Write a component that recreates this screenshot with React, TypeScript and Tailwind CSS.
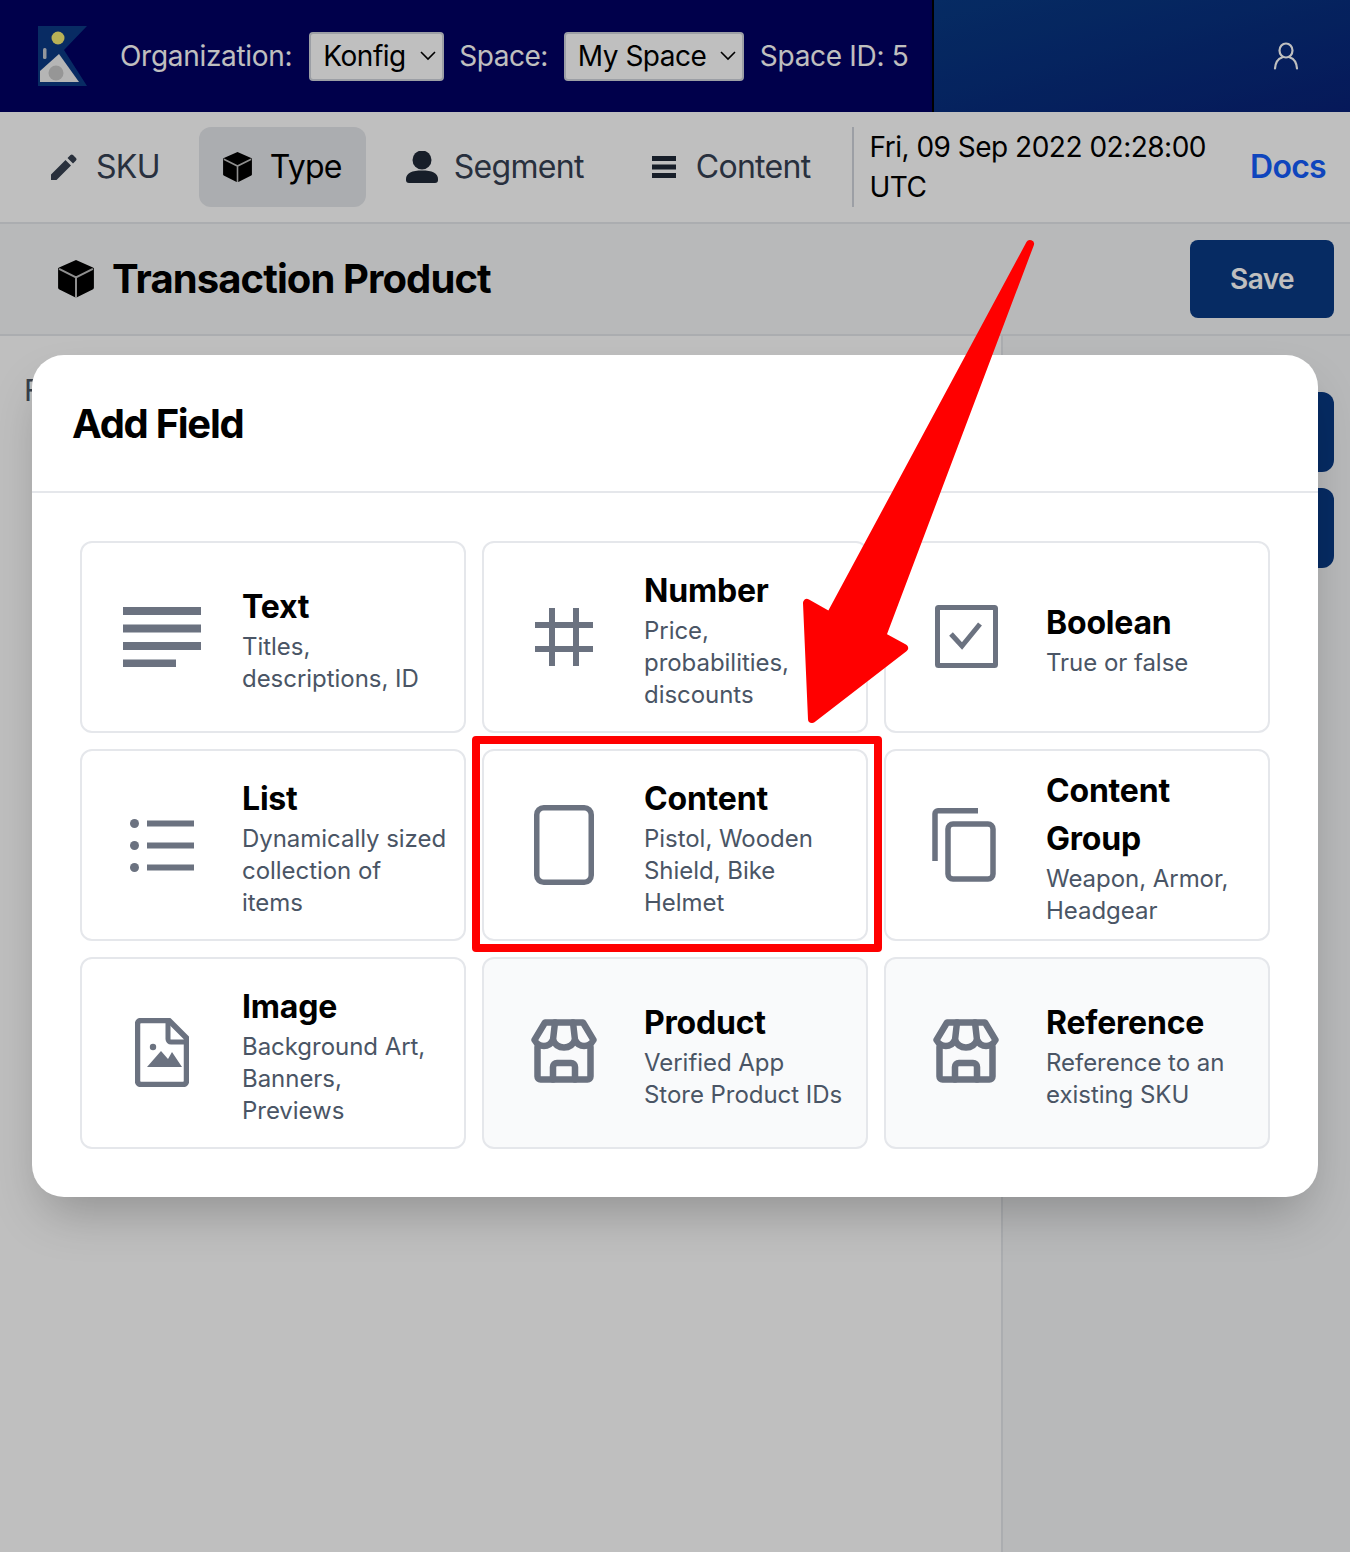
function IconCube({ size }: { size: number }) {
  return (
    <svg width={size} height={size * 1.05} viewBox="0 0 36 38">
      <path d="M18 0L35 7.5a1.5 1.5 0 0 1 1 1.4V28a1.5 1.5 0 0 1-.8 1.3L18 38L.8 29.3A1.5 1.5 0 0 1 0 28V8.9a1.5 1.5 0 0 1 1-1.4Z" fill="#000" />
      <path d="M1 9L18 17.5L35 9M18 17.5V38" fill="none" stroke="#fff" strokeOpacity="0.75" strokeWidth="2" />
    </svg>
  );
}

function IconText() {
  return (
    <svg width="78" height="60" viewBox="0 0 78 60" fill="#6b7280">
      <rect x="0" y="0" width="78" height="8" />
      <rect x="0" y="17.5" width="78" height="8" />
      <rect x="0" y="35" width="78" height="8" />
      <rect x="0" y="52.5" width="53" height="8" />
    </svg>
  );
}

function IconHash() {
  return (
    <svg width="58" height="58" viewBox="0 0 58 58" fill="#6b7280">
      <rect x="14" y="0" width="6" height="58" />
      <rect x="38" y="0" width="6" height="58" />
      <rect x="0" y="14" width="58" height="6" />
      <rect x="0" y="38" width="58" height="6" />
    </svg>
  );
}

function IconCheckbox() {
  return (
    <svg width="63" height="63" viewBox="0 0 63 63" fill="none" stroke="#6b7280" className="-translate-y-[1px]">
      <rect x="2.5" y="2.5" width="58" height="58" rx="1" strokeWidth="5" />
      <path d="M16 29L27 41L45 19" strokeWidth="5" />
    </svg>
  );
}

function IconList() {
  return (
    <svg width="64" height="53" viewBox="0 0 64 53" fill="#6b7280">
      <circle cx="4.5" cy="4.5" r="4.5" />
      <circle cx="4.5" cy="26.5" r="4.5" />
      <circle cx="4.5" cy="48.5" r="4.5" />
      <rect x="17" y="1.5" width="47" height="6" />
      <rect x="17" y="23.5" width="47" height="6" />
      <rect x="17" y="45.5" width="47" height="6" />
    </svg>
  );
}

function IconCard() {
  return (
    <svg width="60" height="80" viewBox="0 0 60 80" fill="none" stroke="#6b7280" strokeWidth="5.5">
      <rect x="2.75" y="2.75" width="54.5" height="74.5" rx="7" />
    </svg>
  );
}

function IconCards() {
  return (
    <svg width="64" height="74" viewBox="0 0 64 74" fill="none" stroke="#6b7280" strokeWidth="5.5" className="-translate-x-[2px]">
      <rect x="16" y="16" width="45" height="55" rx="5" />
      <path d="M46 2.75H6a3 3 0 0 0-3 3V53" />
    </svg>
  );
}

function IconImage() {
  return (
    <svg width="54" height="69" viewBox="0 0 54 69" className="-translate-y-[1px]">
      <path
        d="M6 2.5H34L51.5 20V63a3.5 3.5 0 0 1-3.5 3.5H6A3.5 3.5 0 0 1 2.5 63V6A3.5 3.5 0 0 1 6 2.5Z"
        fill="none"
        stroke="#6b7280"
        strokeWidth="5.5"
        strokeLinejoin="round"
      />
      <path d="M33 3V21a3 3 0 0 0 3 3H51" fill="none" stroke="#6b7280" strokeWidth="5" />
      <circle cx="18" cy="29" r="3.2" fill="#6b7280" />
      <path d="M12 49L26 33L33 41L37 34L47 49Z" fill="#6b7280" />
    </svg>
  );
}

function IconStore() {
  return (
    <svg
      width="66"
      height="64"
      viewBox="0 0 66 64"
      fill="none"
      stroke="#6b7280"
      strokeWidth="6.5"
      strokeLinejoin="round"
      strokeLinecap="round"
      className="-translate-y-[2px]"
    >
      <path d="M14 3.5H52L62.5 21C58 29 48 29 44 21C40 31 26 31 22 21C18 29 8 29 3.5 21Z" />
      <path d="M22 21L24 3.5M44 21L42 3.5" />
      <path d="M6.5 28V57.5a3 3 0 0 0 3 3H56.5a3 3 0 0 0 3-3V28" />
      <path d="M22 60.5V48a4 4 0 0 1 4-4H40a4 4 0 0 1 4 4V60.5" />
    </svg>
  );
}

const fields = [
  { title: 'Text', desc: 'Titles,\ndescriptions, ID', icon: <IconText /> },
  { title: 'Number', desc: 'Price,\nprobabilities,\ndiscounts', icon: <IconHash /> },
  { title: 'Boolean', desc: 'True or false', icon: <IconCheckbox /> },
  { title: 'List', desc: 'Dynamically sized\ncollection of\nitems', icon: <IconList /> },
  { title: 'Content', desc: 'Pistol, Wooden\nShield, Bike\nHelmet', icon: <IconCard /> },
  { title: 'Content\nGroup', desc: 'Weapon, Armor,\nHeadgear', icon: <IconCards /> },
  { title: 'Image', desc: 'Background Art,\nBanners,\nPreviews', icon: <IconImage /> },
  { title: 'Product', desc: 'Verified App\nStore Product IDs', icon: <IconStore />, muted: true },
  { title: 'Reference', desc: 'Reference to an\nexisting SKU', icon: <IconStore />, muted: true },
];

function Chevron() {
  return (
    <svg width="16" height="10" viewBox="0 0 16 10" fill="none" stroke="#000" strokeWidth="1.6" className="shrink-0">
      <path d="M1 1l7 7 7-7" />
    </svg>
  );
}

function Select({ label, width }: { label: string; width: string }) {
  return (
    <div className={`flex h-[49px] items-center justify-between whitespace-nowrap rounded border-2 border-gray-300 bg-white pl-[12px] pr-[6px] text-[28px] tracking-[-0.5px] text-black ${width}`}>
      <span>{label}</span>
      <Chevron />
    </div>
  );
}

export default function App() {
  return (
    <div className="relative h-[1552px] w-[1350px] overflow-hidden bg-white font-['Inter',sans-serif]">
      {/* Top bar */}
      <header className="flex h-[112px]">
        <div className="flex w-[934px] items-center border-r-2 border-black bg-[#000064] pl-[38px] text-[28px] tracking-[-0.3px] text-white">
          <svg width="50" height="60" viewBox="0 0 50 60" className="mr-[32px]">
            <path d="M0 0H49L26 24L49 60H0Z" fill="#0b3a85" />
            <circle cx="20" cy="12" r="6.5" fill="#f6ec74" />
            <rect x="5" y="22" width="3.5" height="11" rx="1.5" fill="#c4c8d0" />
            <path d="M21 28L41 56H2V45Z" fill="#f2f2f2" />
            <circle cx="18" cy="47" r="7.5" fill="#c9c9c9" />
          </svg>
          <span>Organization:</span>
          <div className="ml-[17px] mr-[15px]">
            <Select label="Konfig" width="w-[135px]" />
          </div>
          <span className="tracking-[-0.5px]">Space:</span>
          <div className="ml-4 mr-4">
            <Select label="My Space" width="w-[180px]" />
          </div>
          <span>Space ID: 5</span>
        </div>
        <div className="flex flex-1 items-center justify-end bg-gradient-to-br from-[#083a84] to-[#082178] pr-[51px]">
          <svg width="26" height="28" viewBox="0 0 26 28" fill="none" stroke="#fff" strokeWidth="2.2" strokeLinecap="round">
            <ellipse cx="13" cy="8.5" rx="6.5" ry="7" />
            <path d="M2 26.5C2.5 20 6 16.5 9 15.5M24 26.5C23.5 20 20 16.5 17 15.5" />
          </svg>
        </div>
      </header>

      {/* Nav */}
      <nav className="flex h-[112px] items-center border-b-2 border-gray-200 bg-white pl-[16px] pr-[24px] text-[32px] tracking-[-0.7px] text-gray-700">
        <a className="flex h-[80px] items-center gap-[18px] rounded-xl px-[34px]">
          <svg width="28" height="28" viewBox="0 0 28 28" fill="#374151">
            <path d="M1 27V21.5L15.5 7L21 12.5L6.5 27ZM17.5 5L20.5 2a1.8 1.8 0 0 1 2.5 0L26 5a1.8 1.8 0 0 1 0 2.5L23 10.5Z" />
          </svg>
          SKU
        </a>
        <a className="ml-[5px] flex h-[80px] w-[167px] items-center justify-center gap-[18px] rounded-xl bg-gray-200 text-black">
          <IconCube size={29} />
          Type
        </a>
        <a className="ml-[40px] flex h-[80px] items-center gap-[16px]">
          <svg width="32" height="32" viewBox="0 0 32 32" fill="#1f2937">
            <ellipse cx="16" cy="9" rx="9.5" ry="9.5" />
            <path d="M0 28C0 22 6 19.5 16 19.5S32 22 32 28V29a3 3 0 0 1-3 3H3a3 3 0 0 1-3-3Z" />
          </svg>
          Segment
        </a>
        <a className="ml-[68px] flex h-[80px] items-center gap-[20px]">
          <svg width="24" height="22" viewBox="0 0 24 22" fill="#1f2937">
            <rect width="24" height="5" />
            <rect y="8.5" width="24" height="5" />
            <rect y="17" width="24" height="5" />
          </svg>
          Content
        </a>
        <div className="ml-[41px] h-[80px] border-l-2 border-gray-300 pl-[16px] text-[28px] leading-[40px] tracking-[-0.5px] text-black">
          Fri, 09 Sep 2022 02:28:00
          <br />
          UTC
        </div>
        <a className="ml-auto font-semibold text-blue-600">Docs</a>
      </nav>

      {/* Title bar */}
      <div className="flex h-[112px] items-center justify-between border-b-2 border-gray-200 bg-[#f6f7f9] pl-[58px] pr-[16px]">
        <div className="flex items-center gap-[18px] text-[40px] font-bold tracking-[-0.9px] text-black">
          <IconCube size={36} />
          Transaction Product
        </div>
        <button className="h-[78px] w-[144px] rounded-lg bg-[#083a84] text-[28px] font-semibold tracking-[-0.6px] text-white">Save</button>
      </div>

      {/* Body */}
      <div className="flex h-[1216px]">
        <div className="w-[1001px] pl-[24px] pt-[32px] text-[30px] text-gray-600">Fields</div>
        <div className="flex flex-1 flex-col gap-4 border-l-2 border-gray-200 bg-[#f6f7f9] pl-[15px] pr-[16px] pt-[56px]">
          <div className="h-[80px] rounded-xl bg-[#083a84]" />
          <div className="h-[80px] rounded-xl bg-[#083a84]" />
        </div>
      </div>

      {/* Dimmed backdrop */}
      <div className="absolute inset-0 bg-black/25" />

      {/* Modal */}
      <div className="absolute left-[32px] top-[355px] w-[1286px] rounded-[32px] bg-white shadow-2xl">
        <div className="border-b-2 border-gray-200 px-[40px] pb-[39px] pt-[41px] text-[40px] font-bold leading-[56px] tracking-[-1.3px] text-black">Add Field</div>
        <div className="grid grid-cols-3 gap-4 p-[48px]">
          {fields.map((f) => (
            <div
              key={f.title}
              className={`flex h-[192px] items-center rounded-xl border-2 border-gray-200 ${f.muted ? 'bg-gray-50' : 'bg-white'}`}
            >
              <div className="flex w-[160px] shrink-0 justify-center">{f.icon}</div>
              <div className="flex flex-col pt-[4px]">
                <div className="whitespace-pre-line text-[32px] font-bold leading-[48px] tracking-[-0.2px] text-black">{f.title}</div>
                <div className="whitespace-pre-line text-[24px] leading-[32px] tracking-[-0.04px] text-gray-600">{f.desc}</div>
              </div>
            </div>
          ))}
        </div>
      </div>

      {/* Annotation */}
      <div className="absolute left-[472px] top-[736px] h-[216px] w-[410px] rounded border-[8px] border-[#ff0000]" />
      <svg width="1350" height="1552" viewBox="0 0 1350 1552" className="pointer-events-none absolute left-0 top-0">
        <path
          d="M1030 244L830 616L807 603L812 719L904 648L882 636Z"
          fill="#ff0000"
          stroke="#ff0000"
          strokeWidth="8"
          strokeLinejoin="round"
        />
      </svg>
    </div>
  );
}
